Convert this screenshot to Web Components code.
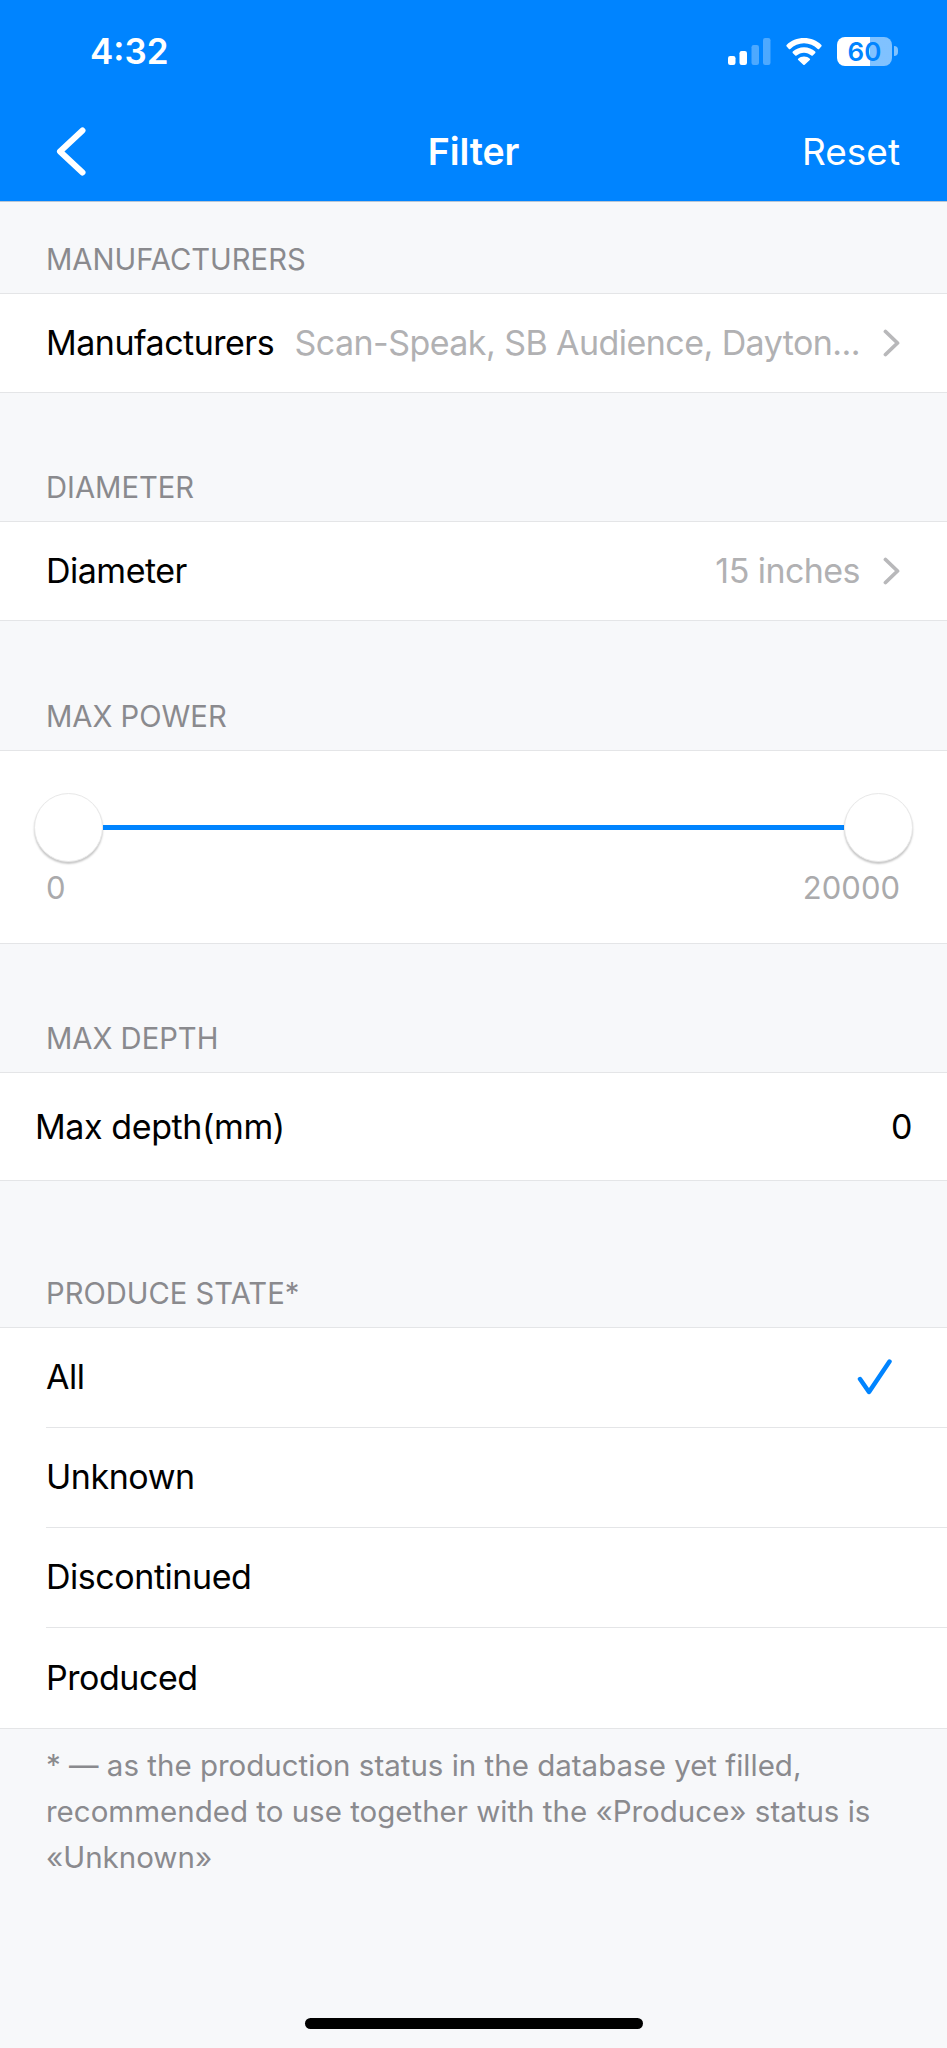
<!DOCTYPE html>
<html>
<head>
<meta charset="utf-8">
<title>Filter</title>
<style>
  html, body { margin: 0; padding: 0; background: #f7f8fa; }
  body { font-family: Inter, "Liberation Sans", sans-serif; }
</style>
</head>
<body>
<filter-screen>
  <status-bar time="4:32" battery="60"></status-bar>
  <nav-bar title="Filter" action="Reset"></nav-bar>

  <section-head gap="91">MANUFACTURERS</section-head>
  <list-group>
    <link-row label="Manufacturers" value="Scan-Speak, SB Audience, Dayton..."></link-row>
  </list-group>

  <section-head gap="128">DIAMETER</section-head>
  <list-group>
    <link-row label="Diameter" value="15 inches"></link-row>
  </list-group>

  <section-head gap="129">MAX POWER</section-head>
  <list-group>
    <range-row min="0" max="20000"></range-row>
  </list-group>

  <section-head gap="128">MAX DEPTH</section-head>
  <list-group>
    <input-row label="Max depth(mm)" value="0"></input-row>
  </list-group>

  <section-head gap="146">PRODUCE STATE*</section-head>
  <list-group>
    <choice-row label="All" checked></choice-row>
    <choice-row label="Unknown"></choice-row>
    <choice-row label="Discontinued"></choice-row>
    <choice-row label="Produced" last></choice-row>
  </list-group>

  <foot-note>* — as the production status in the database yet filled, recommended to use together with the «Produce» status is «Unknown»</foot-note>
  <home-bar></home-bar>
</filter-screen>

<script>
const BLUE = '#0084ff'

class FilterScreen extends HTMLElement {
  constructor() {
    super()
    this.attachShadow({ mode: 'open' })
    this.shadowRoot.innerHTML = `
      <style>
        :host {
          display: flex;
          flex-direction: column;
          width: 947px;
          height: 2048px;
          overflow: hidden;
          background: #f7f8fa;
          color: #000;
          font-family: Inter, "Liberation Sans", sans-serif;
        }
      </style>
      <slot></slot>
    `
  }
}

class StatusBar extends HTMLElement {
  constructor() {
    super()
    this.attachShadow({ mode: 'open' })
  }

  connectedCallback() {
    this.shadowRoot.innerHTML = `
      <style>
        :host {
          display: flex;
          align-items: center;
          height: 104px;
          box-sizing: border-box;
          padding: 0 49px 2px 90px;
          background: ${BLUE};
          color: #fff;
        }
        .time { flex: 1; font-size: 35px; font-weight: 600; }
        .icons { display: flex; align-items: center; gap: 15px; }
        svg { display: block; }
        .battery {
          width: 55px;
          height: 29px;
          border-radius: 8px;
          overflow: hidden;
          background: linear-gradient(to right, #fff 0 60%, rgba(255,255,255,.5) 60% 100%);
          display: flex;
          align-items: center;
          justify-content: center;
          font-size: 26px;
          font-weight: 600;
          color: ${BLUE};
        }
        .cap { width: 4px; height: 10px; margin-left: -13px; border-radius: 0 4px 4px 0; background: rgba(255,255,255,.5); }
      </style>
      <span class="time">${this.getAttribute('time')}</span>
      <div class="icons">
        <svg width="43" height="27" viewBox="0 0 43 27">
          <rect x="0" y="18" width="7.5" height="9" rx="2.2" fill="#fff"/>
          <rect x="11.5" y="13" width="7.5" height="14" rx="2.2" fill="#fff"/>
          <rect x="23.5" y="7" width="7.5" height="20" rx="2.2" fill="#fff" fill-opacity=".3"/>
          <rect x="35" y="0" width="7.5" height="27" rx="2.2" fill="#fff" fill-opacity=".3"/>
        </svg>
        <svg width="36" height="27" viewBox="0 0 36 27">
          <path d="M18 0C11.2 0 5.1 2.6.6 6.9c-.4.4-.4 1-.1 1.4l2.4 2.6c.4.4 1 .4 1.400 0C8 7.300 12.800 5.200 18 5.200s10 2.100 13.700 5.700c.4.400 1 .4 1.400 0l2.400-2.600c.3-.4.3-1-.1-1.400C30.900 2.600 24.800 0 18 0z" fill="#fff"/>
          <path d="M18 9.200c-4.300 0-8.200 1.600-11.200 4.300-.4.4-.4 1-.1 1.400l2.500 2.600c.4.400 1 .4 1.400.1 2-1.800 4.600-2.900 7.400-2.900s5.400 1.100 7.400 2.900c.4.300 1 .3 1.400-.1l2.500-2.600c.3-.4.3-1-.1-1.400-3-2.700-6.900-4.300-11.200-4.300z" fill="#fff"/>
          <path d="M18 18.400c-2.300 0-4.300.9-5.800 2.300-.4.400-.4 1 0 1.400l5.100 4.600c.4.400 1 .4 1.400 0l5.100-4.600c.4-.4.4-1 0-1.400-1.500-1.400-3.500-2.300-5.800-2.300z" fill="#fff"/>
        </svg>
        <div class="battery">${this.getAttribute('battery')}</div>
        <div class="cap"></div>
      </div>
    `
  }
}

class NavBar extends HTMLElement {
  constructor() {
    super()
    this.attachShadow({ mode: 'open' })
  }

  connectedCallback() {
    this.shadowRoot.innerHTML = `
      <style>
        :host {
          display: grid;
          grid-template-columns: 1fr auto 1fr;
          align-items: center;
          height: 98px;
          box-sizing: border-box;
          padding: 0 47px 3px;
          background: ${BLUE};
          border-bottom: 1px solid #b8c6d4;
          color: #fff;
        }
        svg { display: block; margin-left: 9px; }
        .title { font-size: 37.5px; font-weight: 600; letter-spacing: -.1px; }
        .action { justify-self: end; font-size: 37px; }
      </style>
      <svg width="30" height="49" viewBox="0 0 30 49">
        <path d="M26.500 3.500 L4 24.500 L26.500 45.500" fill="none" stroke="#fff" stroke-width="6" stroke-linecap="round" stroke-linejoin="round"/>
      </svg>
      <span class="title">${this.getAttribute('title')}</span>
      <span class="action">${this.getAttribute('action')}</span>
    `
  }
}

class SectionHead extends HTMLElement {
  constructor() {
    super()
    this.attachShadow({ mode: 'open' })
  }

  connectedCallback() {
    this.shadowRoot.innerHTML = `
      <style>
        :host {
          display: flex;
          align-items: flex-end;
          height: ${this.getAttribute('gap')}px;
          box-sizing: border-box;
          padding: 0 46px 16px;
          font-size: 29.2px;
          line-height: 34px;
          color: #8a8a8e;
        }
      </style>
      <slot></slot>
    `
  }
}

class ListGroup extends HTMLElement {
  constructor() {
    super()
    this.attachShadow({ mode: 'open' })
    this.shadowRoot.innerHTML = `
      <style>
        :host {
          display: block;
          background: #fff;
          border-top: 1px solid #e4e5e7;
          border-bottom: 1px solid #e4e5e7;
        }
      </style>
      <slot></slot>
    `
  }
}

class LinkRow extends HTMLElement {
  constructor() {
    super()
    this.attachShadow({ mode: 'open' })
  }

  connectedCallback() {
    this.shadowRoot.innerHTML = `
      <style>
        :host {
          display: flex;
          align-items: center;
          height: 98px;
          box-sizing: border-box;
          padding: 0 47px 1px 46px;
          font-size: 34px;
          letter-spacing: -.5px;
        }
        .value { flex: 1; text-align: right; white-space: nowrap; color: #b1b1b3; margin: 0 23px 0 18px; letter-spacing: -.56px; }
        svg { display: block; flex: none; }
      </style>
      <span>${this.getAttribute('label')}</span>
      <span class="value">${this.getAttribute('value')}</span>
      <svg width="17" height="28" viewBox="0 0 17 28">
        <path d="M2.500 2.500 L14.500 14 L2.500 25.500" fill="none" stroke="#b8b8ba" stroke-width="3.800" stroke-linecap="round" stroke-linejoin="round"/>
      </svg>
    `
  }
}

class RangeRow extends HTMLElement {
  constructor() {
    super()
    this.attachShadow({ mode: 'open' })
  }

  connectedCallback() {
    this.shadowRoot.innerHTML = `
      <style>
        :host {
          display: flex;
          flex-direction: column;
          height: 192px;
          box-sizing: border-box;
          padding-top: 42px;
        }
        .track { display: flex; align-items: center; padding: 0 34px; }
        .thumb {
          flex: none;
          width: 69px;
          height: 69px;
          box-sizing: border-box;
          border-radius: 50%;
          background: #fff;
          border: 1px solid #e8e8e8;
          box-shadow: 0 2px 2px rgba(0,0,0,.22);
        }
        .line { flex: 1; height: 5px; background: ${BLUE}; }
        .labels {
          display: flex;
          justify-content: space-between;
          padding: 7px 47px 0 46px;
          font-size: 31px;
          line-height: 38px;
          color: #aaaaac;
        }
      </style>
      <div class="track">
        <div class="thumb"></div>
        <div class="line"></div>
        <div class="thumb"></div>
      </div>
      <div class="labels">
        <span>${this.getAttribute('min')}</span>
        <span>${this.getAttribute('max')}</span>
      </div>
    `
  }
}

class InputRow extends HTMLElement {
  constructor() {
    super()
    this.attachShadow({ mode: 'open' })
  }

  connectedCallback() {
    this.shadowRoot.innerHTML = `
      <style>
        :host {
          display: flex;
          align-items: center;
          justify-content: space-between;
          height: 107px;
          padding: 0 35px;
          font-size: 34px;
          letter-spacing: -.4px;
        }
      </style>
      <span>${this.getAttribute('label')}</span>
      <span>${this.getAttribute('value')}</span>
    `
  }
}

class ChoiceRow extends HTMLElement {
  constructor() {
    super()
    this.attachShadow({ mode: 'open' })
  }

  connectedCallback() {
    const check = this.hasAttribute('checked')
      ? `<svg width="36" height="36" viewBox="0 0 36 36">
           <path d="M3 20 L12 33 L32.500 2.500" fill="none" stroke="${BLUE}" stroke-width="4.500" stroke-linecap="round" stroke-linejoin="round"/>
         </svg>`
      : ''
    this.shadowRoot.innerHTML = `
      <style>
        :host { display: block; padding-left: 46px; font-size: 34px; letter-spacing: -.45px; }
        .inner {
          display: flex;
          align-items: center;
          justify-content: space-between;
          height: 100px;
          box-sizing: border-box;
          padding: 0 54px 2px 0;
          border-bottom: ${this.hasAttribute('last') ? '0' : '1px solid #e4e5e7'};
        }
        svg { display: block; }
      </style>
      <div class="inner">
        <span>${this.getAttribute('label')}</span>
        ${check}
      </div>
    `
  }
}

class FootNote extends HTMLElement {
  constructor() {
    super()
    this.attachShadow({ mode: 'open' })
    this.shadowRoot.innerHTML = `
      <style>
        :host {
          display: block;
          padding: 13px 60px 0 46px;
          font-size: 29.5px;
          line-height: 46px;
          color: #8a8a8e;
        }
      </style>
      <slot></slot>
    `
  }
}

class HomeBar extends HTMLElement {
  constructor() {
    super()
    this.attachShadow({ mode: 'open' })
    this.shadowRoot.innerHTML = `
      <style>
        :host {
          display: flex;
          justify-content: center;
          margin-top: auto;
          padding-bottom: 19px;
        }
        .bar { width: 338px; height: 11px; border-radius: 6px; background: #000; }
      </style>
      <div class="bar"></div>
    `
  }
}

customElements.define('filter-screen', FilterScreen)
customElements.define('status-bar', StatusBar)
customElements.define('nav-bar', NavBar)
customElements.define('section-head', SectionHead)
customElements.define('list-group', ListGroup)
customElements.define('link-row', LinkRow)
customElements.define('range-row', RangeRow)
customElements.define('input-row', InputRow)
customElements.define('choice-row', ChoiceRow)
customElements.define('foot-note', FootNote)
customElements.define('home-bar', HomeBar)
</script>
</body>
</html>
